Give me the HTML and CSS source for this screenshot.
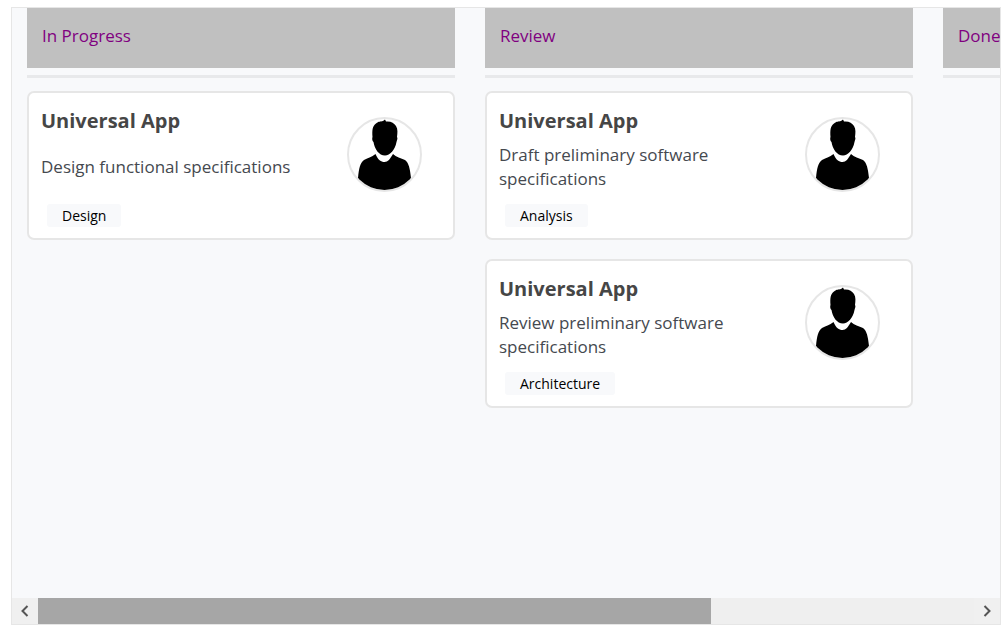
FILE: index.html
```html
<!DOCTYPE html>
<html lang="en">
<head>
<meta charset="utf-8">
<title>Board</title>
<link rel="stylesheet" href="styles.css">
</head>
<body>
<svg class="defs" aria-hidden="true">
  <symbol id="person" viewBox="2 2 71 71">
    <path d="M11 61C12 51 13 46 17 43C20 41 25 40 28.500 37C31 43 34 45 37.500 45C41 45 43 42 46 37C49 40 54 41 58 43C62 46 63 52 64 61L64 75H11Z"/>
    <path d="M25.500 20C25 13 25.500 9 29 6.500C32 4 33 5 36 4L38 2.500L39 4.500C44 4 47 6 49 9C51 12 50.500 16 50 20C51 21 50 23 49.500 25C48 33 43 38.500 38 38.500C32 38.500 27.500 32 26.500 25C25 24 25 21 25.500 20Z"/>
  </symbol>
</svg>
<main class="board">
  <div class="columns">
    <section class="column">
      <h2 class="column-header">In Progress</h2>
      <div class="cards">
        <article class="card">
          <div class="card-body">
            <h3 class="card-title">Universal App</h3>
            <p class="card-text"><span>Design functional specifications</span></p>
            <span class="tag">Design</span>
          </div>
          <svg class="avatar" role="img" aria-label="Assignee"><use href="#person"/></svg>
        </article>
      </div>
    </section>
    <section class="column">
      <h2 class="column-header">Review</h2>
      <div class="cards">
        <article class="card">
          <div class="card-body">
            <h3 class="card-title">Universal App</h3>
            <p class="card-text"><span>Draft preliminary software specifications</span></p>
            <span class="tag">Analysis</span>
          </div>
          <svg class="avatar" role="img" aria-label="Assignee"><use href="#person"/></svg>
        </article>
        <article class="card">
          <div class="card-body">
            <h3 class="card-title">Universal App</h3>
            <p class="card-text"><span>Review preliminary software specifications</span></p>
            <span class="tag">Architecture</span>
          </div>
          <svg class="avatar" role="img" aria-label="Assignee"><use href="#person"/></svg>
        </article>
      </div>
    </section>
    <section class="column">
      <h2 class="column-header">Done</h2>
      <div class="cards"></div>
    </section>
  </div>
  <div class="scrollbar">
    <button class="scroll-button" type="button" aria-label="Scroll left">
      <svg class="chevron" viewBox="0 0 10 12"><path d="M7.500 1L2.500 6L7.500 11"/></svg>
    </button>
    <div class="track"><div class="thumb"></div></div>
    <button class="scroll-button" type="button" aria-label="Scroll right">
      <svg class="chevron" viewBox="0 0 10 12"><path d="M2.500 1L7.500 6L2.500 11"/></svg>
    </button>
  </div>
</main>
</body>
</html>
```
FILE: styles.css
```css
* {
  box-sizing: border-box;
}

body {
  display: flex;
  min-height: 100vh;
  margin: 0;
  padding: 7px 3px 10px 11px;
  background: #fff;
  font-family: "Open Sans", "Noto Sans", sans-serif;
}

h2, h3, p {
  margin: 0;
}

.defs {
  position: absolute;
  width: 0;
  height: 0;
}

.board {
  display: flex;
  flex: 1;
  flex-direction: column;
  min-width: 0;
  border: 1px solid #e6e6e6;
  background: #f8f9fb;
}

.columns {
  display: flex;
  flex: 1;
  gap: 30px;
  padding-left: 15px;
  overflow: hidden;
}

.column {
  flex: 0 0 428px;
}

.column-header {
  padding: 16px 15px 20px;
  background: #c0c0c0;
  color: purple;
  font-size: 17px;
  font-weight: 400;
  line-height: 24px;
}

.cards {
  display: flex;
  flex-direction: column;
  gap: 19px;
  margin-top: 7px;
  padding-top: 13px;
  border-top: 3px solid #e8e9eb;
}

.card {
  display: flex;
  align-items: flex-start;
  justify-content: space-between;
  padding: 14px 31px 11px 12px;
  border: 2px solid #e6e6e6;
  border-radius: 7px;
  background: #fff;
}

.card-body {
  width: 260px;
}

.card-title {
  color: #464646;
  font-size: 20px;
  font-weight: 700;
  line-height: 28px;
}

.card-text {
  display: flex;
  align-items: center;
  min-height: 64px;
  color: #45494f;
  font-size: 17px;
  line-height: 24px;
}

.tag {
  display: block;
  width: fit-content;
  margin: 5px 0 0 6px;
  padding: 0 15px;
  border-radius: 3px;
  background: #f8f9fb;
  color: #000;
  font-size: 14px;
  line-height: 23px;
}

.avatar {
  width: 75px;
  height: 75px;
  margin-top: 10px;
  border: 2px solid #e6e6e6;
  border-radius: 50%;
}

.scrollbar {
  display: flex;
  height: 26px;
  background: #efefef;
}

.scroll-button {
  display: flex;
  flex: 0 0 26px;
  align-items: center;
  justify-content: center;
  padding: 0;
  border: 0;
  background: #f0f0f0;
}

.chevron {
  width: 10px;
  height: 12px;
  fill: none;
  stroke: #555;
  stroke-width: 2;
}

.track {
  flex: 1;
}

.thumb {
  width: 71.9%;
  height: 100%;
  background: #a6a6a6;
}
```
